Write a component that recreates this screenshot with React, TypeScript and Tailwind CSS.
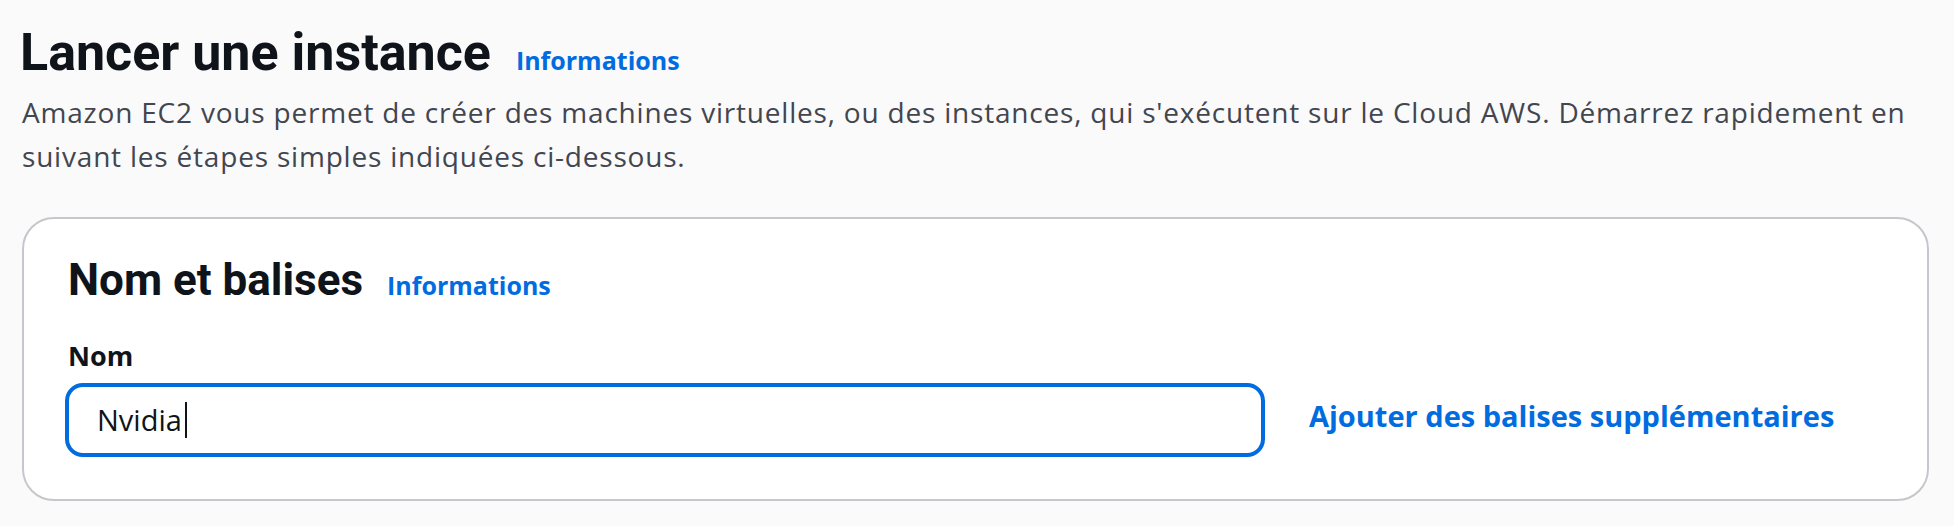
export default function App() {
  return (
    <main className="min-h-[526px] bg-[#fafafa] pl-[22px] pr-[25px] font-['Open_Sans',sans-serif]">
      {/* header */}
      <div className="flex items-baseline pt-[23px]">
        <h1 className="-ml-[2px] font-['Roboto',sans-serif] text-[52px] leading-[60px] font-bold text-[#0f141a]">
          Lancer une instance
        </h1>
        <a href="#" className="ml-[25px] text-[25px] font-bold text-[#006ce0]">
          Informations
        </a>
      </div>
      <p className="mt-[7px] text-[28px] leading-[44px] tracking-[0.8px] text-[#424650]">
        Amazon EC2 vous permet de créer des machines virtuelles, ou des instances, qui
        s'exécutent sur le Cloud AWS. Démarrez rapidement en suivant les étapes simples
        indiquées ci-dessous.
      </p>

      {/* card */}
      <section className="mt-[39px] rounded-[32px] border-2 border-[#c6c6cd] bg-white pt-[35px] pb-[42px] pl-[41px]">
        <div className="ml-[3px] flex items-baseline">
          <h2 className="font-['Roboto',sans-serif] text-[44px] leading-[52px] font-bold text-[#0f141a]">
            Nom et balises
          </h2>
          <a href="#" className="ml-[24px] text-[25px] font-bold text-[#006ce0]">
            Informations
          </a>
        </div>

        <label className="mt-[32px] ml-[3px] block text-[27px] leading-[36px] font-bold text-[#0f141a]">
          Nom
        </label>

        <div className="mt-[9px] flex items-start">
          <div className="flex h-[74px] w-[1200px] items-center rounded-[18px] border-4 border-[#006ce0] bg-white pl-[28px]">
            <span className="text-[29px] leading-[40px] text-[#0f141a]">Nvidia</span>
            <span className="ml-[3px] inline-block h-[36px] w-[2px] bg-[#0f141a]" />
          </div>
          <a href="#" className="mt-[13px] ml-[44px] text-[29px] leading-[40px] font-bold text-[#006ce0]">
            Ajouter des balises supplémentaires
          </a>
        </div>
      </section>
    </main>
  );
}
